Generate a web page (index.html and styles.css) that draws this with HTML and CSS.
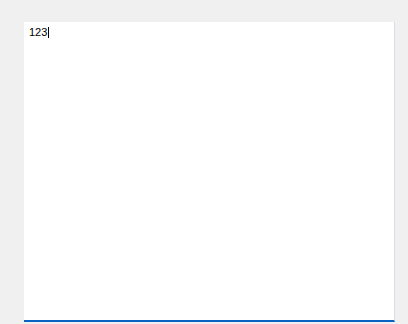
FILE: index.html
```html
<!DOCTYPE html>
<html lang="en">
<head>
  <meta charset="UTF-8">
  <meta name="viewport" content="width=device-width, initial-scale=1.0">
  <title>Editor</title>
  <link rel="stylesheet" href="styles.css">
</head>
<body>
  <div class="editor">
    <div class="editor__text">123<span class="caret"></span></div>
  </div>
</body>
</html>
```

FILE: styles.css
```css
body {
  margin: 0;
  padding: 22px 0 0 24px;
  background-color: #f0f0f0;
  font-family: "Liberation Sans", Arial, sans-serif;
}

.editor {
  box-sizing: border-box;
  width: 371px;
  height: 300px;
  padding: 4px 5px;
  background-color: white;
  border-right: 1px solid #d9dee6;
  border-bottom: 2px solid #0a62c2;
}

.editor__text {
  font-size: 11px;
  line-height: 13px;
  color: black;
}

.caret {
  display: inline-block;
  width: 1px;
  height: 11px;
  margin-left: 1px;
  background-color: black;
  vertical-align: -2px;
}
```
